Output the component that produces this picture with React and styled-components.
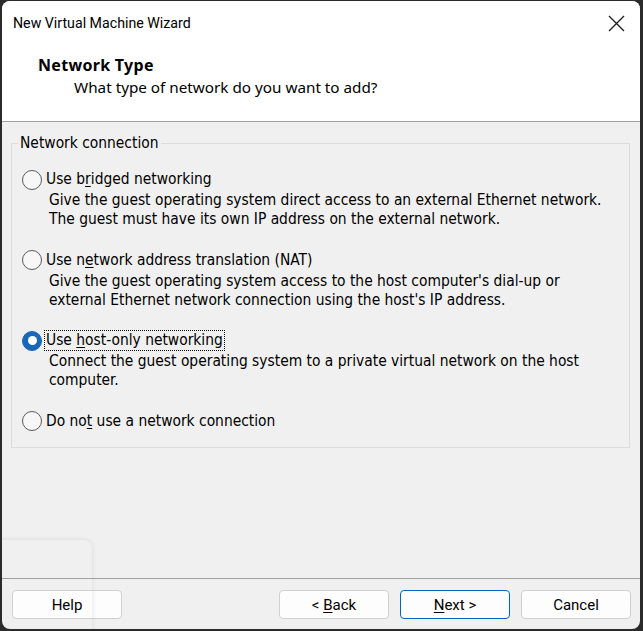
import React from "react";
import styled, { createGlobalStyle } from "styled-components";

const Global = createGlobalStyle`
  html, body { margin: 0; padding: 0; background: #2b2b2b; }
  body { width: 643px; height: 631px; overflow: hidden; }
  #root { padding-top: 1px; padding-left: 2px; }
`;

const uiFont = `Roboto, "Noto Sans", sans-serif`;
const headFont = `"Noto Sans", "Open Sans", sans-serif`;
const dlgFont = `"DejaVu Sans Condensed", "DejaVu Sans", sans-serif`;

const Window = styled.div`
  position: relative;
  width: 638px;
  height: 628px;
  border-radius: 8px;
  overflow: hidden;
  background: #f0f0f0;
  display: flex;
  flex-direction: column;
  color: #000;
`;

const Header = styled.div`
  background: #fff;
  height: 120px;
  border-bottom: 1px solid #a0a0a0;
  display: flex;
  flex-direction: column;
`;

const TitleBar = styled.div`
  height: 44px;
  display: flex;
  align-items: center;
  justify-content: space-between;
  padding: 0 14px 0 11px;
`;

const Title = styled.div`
  font-family: ${uiFont};
  font-size: 14.2px;
`;

const CloseButton = styled.div`
  width: 20px;
  height: 20px;
  display: flex;
  align-items: center;
  justify-content: center;
`;

const HeaderText = styled.div`
  padding-left: 36px;
  margin-top: 10px;
  display: flex;
  flex-direction: column;
`;

const StepTitle = styled.div`
  font-family: ${headFont};
  font-weight: 700;
  font-size: 16px;
  line-height: 21px;
  letter-spacing: 0.3px;
`;

const StepSub = styled.div`
  font-family: ${headFont};
  font-size: 15.25px;
  line-height: 23px;
  padding-left: 36px;
`;

const Body = styled.div`
  flex: 1;
  display: flex;
  flex-direction: column;
  padding: 12px 10px 0 9px;
`;

const GroupBox = styled.fieldset`
  margin: 0;
  border: 1px solid #dcdcdc;
  padding: 16px 10px 15px 10px;
  display: flex;
  flex-direction: column;
  gap: 20.5px;
  font-family: ${dlgFont};
  font-size: 15.4px;
`;

const Legend = styled.legend`
  padding: 0 2px;
  margin-left: -4px;
  line-height: 19px;
`;

const Option = styled.div`
  display: flex;
  flex-direction: column;
`;

const RadioRow = styled.div`
  display: flex;
  align-items: center;
  height: 21px;
  gap: 2px;
`;

const Radio = styled.span`
  width: 20px;
  height: 20px;
  box-sizing: border-box;
  border-radius: 50%;
  flex: none;
  display: flex;
  align-items: center;
  justify-content: center;
  background: ${(p) => (p.$checked ? "#1a67b8" : "#f7f7f7")};
  border: 1px solid ${(p) => (p.$checked ? "#1a67b8" : "#5a5a5a")};
  &::after {
    content: "";
    display: ${(p) => (p.$checked ? "block" : "none")};
    width: 9px;
    height: 9px;
    border-radius: 50%;
    background: #fff;
  }
`;

const Label = styled.span`
  line-height: 19px;
  padding: 0 1px;
  border: 1px dotted ${(p) => (p.$focused ? "#000" : "transparent")};
  white-space: nowrap;
`;

const Description = styled.div`
  padding-left: 27px;
  margin-top: 1px;
  line-height: 19px;
`;

const Footer = styled.div`
  border-top: 1px solid #a0a0a0;
  height: 51px;
  box-sizing: border-box;
  padding: 11px 9px 0 10px;
  display: flex;
  align-items: flex-start;
  gap: 11px;
`;

const Spacer = styled.div`
  flex: 1;
`;

const Button = styled.button`
  width: 110px;
  height: 29px;
  box-sizing: border-box;
  border-radius: 4px;
  background: #fdfdfd;
  border: 1px solid ${(p) => (p.$primary ? "#0067c0" : "#d0d0d0")};
  font-family: ${uiFont};
  font-size: 15px;
  color: #000;
  padding: 0;
  display: flex;
  align-items: center;
  justify-content: center;
`;

const Shadow = styled.div`
  position: absolute;
  left: -20px;
  top: 539px;
  width: 110px;
  height: 140px;
  border-radius: 8px;
  box-shadow: 0 0 5px rgba(0, 0, 0, 0.1);
  pointer-events: none;
`;

const U = styled.span`
  text-decoration: underline;
  text-underline-offset: 2px;
`;

function CloseIcon() {
  return (
    <svg width="17" height="17" viewBox="0 0 17 17">
      <path d="M1 1 L16 16 M16 1 L1 16" stroke="#1b1b1b" strokeWidth="1.3" fill="none" />
    </svg>
  );
}

const options = [
  {
    label: (
      <>
        Use b<U>r</U>idged networking
      </>
    ),
    desc: [
      "Give the guest operating system direct access to an external Ethernet network.",
      "The guest must have its own IP address on the external network.",
    ],
  },
  {
    label: (
      <>
        Use n<U>e</U>twork address translation (NAT)
      </>
    ),
    desc: [
      "Give the guest operating system access to the host computer's dial-up or",
      "external Ethernet network connection using the host's IP address.",
    ],
  },
  {
    label: (
      <>
        Use <U>h</U>ost-only networking
      </>
    ),
    desc: [
      "Connect the guest operating system to a private virtual network on the host",
      "computer.",
    ],
    checked: true,
  },
  {
    label: (
      <>
        Do no<U>t</U> use a network connection
      </>
    ),
    desc: [],
  },
];

export default function App() {
  return (
    <>
      <Global />
      <Window>
        <Header>
          <TitleBar>
            <Title>New Virtual Machine Wizard</Title>
            <CloseButton>
              <CloseIcon />
            </CloseButton>
          </TitleBar>
          <HeaderText>
            <StepTitle>Network Type</StepTitle>
            <StepSub>What type of network do you want to add?</StepSub>
          </HeaderText>
        </Header>
        <Body>
          <GroupBox>
            <Legend>Network connection</Legend>
            {options.map((o, i) => (
              <Option key={i}>
                <RadioRow>
                  <Radio $checked={o.checked} />
                  <Label $focused={o.checked}>{o.label}</Label>
                </RadioRow>
                {o.desc.length > 0 && (
                  <Description>
                    {o.desc.map((d, j) => (
                      <div key={j}>{d}</div>
                    ))}
                  </Description>
                )}
              </Option>
            ))}
          </GroupBox>
          <Spacer />
        </Body>
        <Footer>
          <Button>Help</Button>
          <Spacer />
          <Button>
            &lt;&nbsp;<U>B</U>ack
          </Button>
          <Button $primary>
            <U>N</U>ext &gt;
          </Button>
          <Button>Cancel</Button>
        </Footer>
        <Shadow />
      </Window>
    </>
  );
}
